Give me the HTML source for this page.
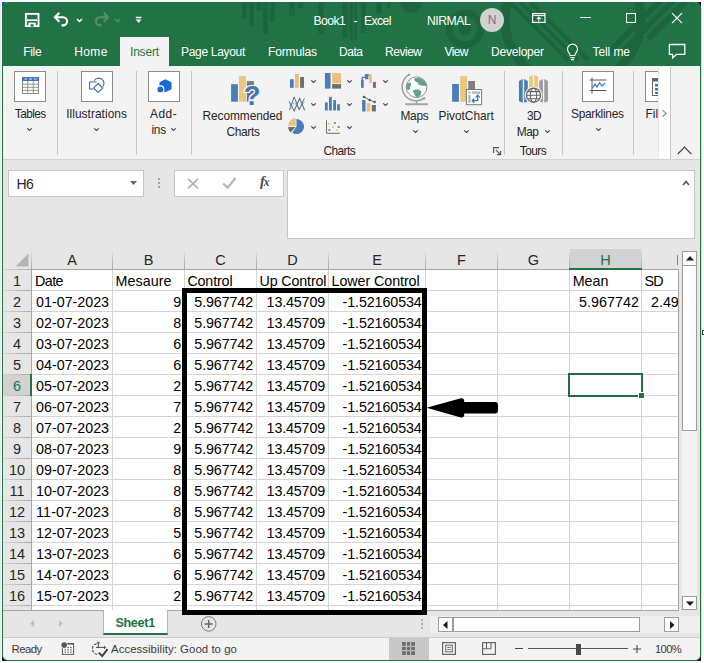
<!DOCTYPE html>
<html><head><meta charset="utf-8"><title>Book1 - Excel</title>
<style>
*{box-sizing:border-box;margin:0;padding:0}
html,body{width:704px;height:663px;overflow:hidden;background:#fff}
body{font-family:"Liberation Sans",sans-serif;position:relative;color:#262626}
div,span,svg{position:absolute}
#win{left:2px;top:2px;width:699px;height:659px;background:#e6e6e6;border-left:1px solid #217346;border-right:1px solid #217346;border-bottom:1px solid #217346;border-radius:6px 6px 6px 6px}
#shadow{left:701px;top:8px;width:1px;height:648px;background:#dedede}
.cor{width:6px;height:6px;background:#0a1030}
#title{left:2px;top:2px;width:699px;height:64px;background:#217346;border-radius:7px 7px 0 0;overflow:hidden}
.tt{color:#fff;font-size:12.6px;white-space:nowrap;line-height:16px}
#ribbon{left:3px;top:66px;width:697px;height:93px;background:#f3f3f3}
#ribline{left:3px;top:159px;width:697px;height:1px;background:#d2d2d2}
.rl{font-size:12.4px;color:#262626;white-space:nowrap;line-height:15px}
.sep{width:1px;background:#c6c6c6;top:71px;height:84px}
.ibox{width:32px;height:31px;border:1px solid #8c8c8c;background:#fff;top:71px}
.chev{width:7px;height:4px}
#grid{left:3px;top:249px;width:675px;height:361px;background:#fff;overflow:hidden}
.ch{top:0;height:20px;background:#e6e6e6;font-size:14.5px;text-align:center;line-height:23px;color:#262626}
.rh{left:0;width:28px;height:21px;background:#e6e6e6;font-size:14.5px;text-align:center;line-height:22px;color:#262626}
.c{height:21px;font-size:14.2px;line-height:22px;white-space:nowrap;color:#000}
.vl{width:1px;background:#d4d4d4;top:21px;height:342px}
.hl{height:1px;background:#d4d4d4;left:29px;width:650px}
.st{font-size:11.8px;color:#3b3b3b;white-space:nowrap;line-height:14px}
</style></head><body>
<div style="left:0;top:2px;width:1px;height:659px;background:#ececec"></div><div class="cor" style="left:2px;top:2px;background:#1a3ff0"></div><div class="cor" style="left:695px;top:2px"></div><div class="cor" style="left:695px;top:655px"></div><div class="cor" style="left:2px;top:655px;background:#0a1030"></div><div id="shadow"></div><div id="win"></div>
<div id="title">
<svg style="left:0;top:0" width="700" height="64" viewBox="2 2 700 64"><g fill="#1c653d"><rect x="242" y="2" width="5" height="17"/><rect x="249" y="2" width="5" height="24"/><rect x="256.500" y="2" width="5" height="9"/><rect x="263" y="2" width="5" height="32"/><rect x="270" y="2" width="4.500" height="20"/><rect x="289.500" y="2" width="5" height="14"/><rect x="298" y="2" width="5" height="6"/><rect x="318.500" y="2" width="5" height="32"/><rect x="342.500" y="2" width="5" height="36"/><rect x="349.500" y="2" width="3.500" height="38"/><rect x="354.500" y="2" width="2.500" height="38"/><rect x="361" y="2" width="5" height="31"/><rect x="376.500" y="2" width="5" height="12"/><rect x="387" y="2" width="3.500" height="6"/><circle cx="411" cy="2" r="11"/></g><g fill="none" stroke="#1c653d"><circle cx="465" cy="29" r="3.200" stroke-width="6.500"/><circle cx="465" cy="29" r="15.700" stroke-width="7"/><circle cx="573" cy="18" r="68" stroke-width="9"/><path d="M510 2 L568 60 M520 2 L578 60 M530 2 L588 60" stroke-width="4"/><path d="M661 0 L610 51 M674 0 L620 54 M687 0 L648 39" stroke-width="6"/></g></svg>
</div>
<div style="left:120px;top:37px;width:49px;height:29px;background:#f3f3f3"></div>
<svg style="left:24px;top:12px" width="16" height="16" viewBox="0 0 16 16"><rect x="1.9" y="1.9" width="12.6" height="12.2" fill="none" stroke="#fff" stroke-width="1.9"/><path d="M3 8.2h10" stroke="#fff" stroke-width="1.7"/><rect x="4.4" y="10.6" width="7.4" height="4" fill="#fff"/><rect x="6.600" y="12.2" width="3" height="2.400" fill="#217346"/></svg>
<svg style="left:53px;top:11px" width="18" height="16" viewBox="0 0 18 16"><path d="M6.3 1.700 L1.900 6.200 L6.300 10.700 M2.200 6.200 H10 A4.100 4.100 0 0 1 10 14.400 H8.500" fill="none" stroke="#fff" stroke-width="2.1"/></svg>
<svg style="left:75.500px;top:17.500px" width="7" height="5" viewBox="0 0 7 5"><path d="M1 1 L3.500 3.600 L6 1" fill="none" stroke="#fff" stroke-width="1.400"/></svg>
<svg style="left:92px;top:11px" width="18" height="16" viewBox="0 0 18 16"><path d="M11.700 1.700 L16.100 6.200 L11.700 10.700 M15.800 6.200 H8 A4.100 4.100 0 0 0 8 14.400 H9.500" fill="none" stroke="#4e9169" stroke-width="2.1"/></svg>
<svg style="left:114px;top:17.500px" width="7" height="5" viewBox="0 0 7 5"><path d="M1 1 L3.500 3.600 L6 1" fill="none" stroke="#4e9169" stroke-width="1.400"/></svg>
<svg style="left:135px;top:16px" width="7" height="8" viewBox="0 0 7 8"><path d="M0.800 1.500h5.600" stroke="#fff" stroke-width="1.500"/><path d="M0.800 3.600h5.600l-2.800 3.400z" fill="#fff"/></svg>
<span style="left:313.50px;top:14.00px;font-size:12.2px;line-height:14px;color:#fff;white-space:pre;letter-spacing:-0.60px">Book1</span><span style="left:353.50px;top:14.00px;font-size:12.2px;line-height:14px;color:#fff;white-space:pre">-</span><span style="left:364.00px;top:14.00px;font-size:12.2px;line-height:14px;color:#fff;white-space:pre;letter-spacing:-0.60px">Excel</span>
<span style="left:427.00px;top:14.00px;font-size:12.2px;line-height:14px;color:#fff;white-space:pre;letter-spacing:-0.46px">NIRMAL</span>
<div style="left:480px;top:8px;width:24px;height:24px;border-radius:12px;background:#d3d0d0;color:#7a7286;font-size:12px;line-height:24px;text-align:center">N</div>
<svg style="left:531px;top:12px" width="16" height="13" viewBox="0 0 16 13"><rect x="1.600" y="1.600" width="12.400" height="8.800" fill="none" stroke="#fff" stroke-width="1.200"/><path d="M1.600 3.600h12.400" stroke="#fff" stroke-width="1"/><path d="M7.800 9.500V5.500M5.800 7.200L7.800 5.200l2 2" fill="none" stroke="#fff" stroke-width="1.100"/></svg>
<div style="left:580px;top:17px;width:11px;height:1px;background:#fff"></div>
<div style="left:626px;top:13px;width:10px;height:10px;border:1.2px solid #fff"></div>
<svg style="left:671px;top:12px" width="12" height="12" viewBox="0 0 12 12"><path d="M1 1.200L11 11.200M11 1.200L1 11.200" stroke="#fff" stroke-width="1.200"/></svg>
<span style="left:23.20px;top:45.00px;font-size:12px;line-height:14px;color:#fff;white-space:pre;letter-spacing:-0.31px">File</span>
<span style="left:74.30px;top:45.00px;font-size:12px;line-height:14px;color:#fff;white-space:pre;letter-spacing:0.35px">Home</span>
<span style="left:130.00px;top:45.00px;font-size:12px;line-height:14px;color:#217346;white-space:pre;letter-spacing:-0.20px">Insert</span>
<span style="left:181.00px;top:45.00px;font-size:12px;line-height:14px;color:#fff;white-space:pre;letter-spacing:-0.31px">Page Layout</span>
<span style="left:268.00px;top:45.00px;font-size:12px;line-height:14px;color:#fff;white-space:pre;letter-spacing:-0.15px">Formulas</span>
<span style="left:339.00px;top:45.00px;font-size:12px;line-height:14px;color:#fff;white-space:pre;letter-spacing:-0.46px">Data</span>
<span style="left:385.00px;top:45.00px;font-size:12px;line-height:14px;color:#fff;white-space:pre;letter-spacing:-0.47px">Review</span>
<span style="left:444.50px;top:45.00px;font-size:12px;line-height:14px;color:#fff;white-space:pre;letter-spacing:-0.60px">View</span>
<span style="left:491.00px;top:45.00px;font-size:12px;line-height:14px;color:#fff;white-space:pre;letter-spacing:-0.21px">Developer</span>
<span style="left:592.50px;top:45.00px;font-size:12px;line-height:14px;color:#fff;white-space:pre;letter-spacing:-0.09px">Tell me</span>
<svg style="left:566px;top:43px" width="13" height="18" viewBox="0 0 13 18"><path d="M4.2 12.5 C4.2 10.5 1.5 9.2 1.5 6.2 A5 5 0 0 1 11.5 6.2 C11.5 9.2 8.8 10.5 8.8 12.5 Z M4.3 14.6h4.4 M5 16.6h3" fill="none" stroke="#fff" stroke-width="1.2"/></svg>
<svg style="left:668px;top:43px" width="19" height="16" viewBox="0 0 19 16"><path d="M1.400 1.500h15.400v9.800H8.600L4.600 15v-3.700H1.400z" fill="none" stroke="#fff" stroke-width="1.300"/></svg>
<div id="ribbon"></div><div id="ribline"></div>
<div class="sep" style="left:57px"></div>
<div class="sep" style="left:136px"></div>
<div class="sep" style="left:191px"></div>
<div class="sep" style="left:504px"></div>
<div class="sep" style="left:562px"></div>
<div class="sep" style="left:633px"></div>
<div class="ibox" style="left:14px"></div>
<svg style="left:22px;top:77px" width="17" height="17" viewBox="0 0 17 17"><rect x="0.500" y="0.500" width="16" height="16" fill="#fff" stroke="#8a8a8a"/><rect x="0" y="0" width="17" height="4" fill="#4472c4"/><path d="M2.500 2h2.500M7 2h3M12 2h2.500" stroke="#dfe8f6" stroke-width="1"/><path d="M0.500 7.200h16M0.500 10.300h16M0.500 13.400h16M5.700 4v12.500M11.300 4v12.500" stroke="#8a8a8a" stroke-width="0.900"/></svg>
<span style="left:14.80px;top:107.00px;font-size:11.9px;line-height:14px;color:#262626;white-space:pre;letter-spacing:-0.60px">Tables</span><svg style="left:26.3px;top:126.5px" width="7" height="5" viewBox="0 0 7 5"><path d="M1.250 1.300L3.500 3.500L5.750 1.300" fill="none" stroke="#444" stroke-width="1.100"/></svg>
<div class="ibox" style="left:81px"></div>
<svg style="left:88px;top:76px" width="20" height="20" viewBox="0 0 20 20"><path d="M8.500 6H1.600V13H5.500" fill="none" stroke="#3b6fb6" stroke-width="1.100"/><path d="M6.200 4.800A5.200 5.200 0 1 1 14.700 10.700" fill="none" stroke="#3b6fb6" stroke-width="1.100"/><path d="M10.200 7.500L14.700 12L10.200 16.500L5.700 12Z" fill="#fff" stroke="#3b6fb6" stroke-width="1.100"/></svg>
<span style="left:66.20px;top:107.00px;font-size:11.9px;line-height:14px;color:#262626;white-space:pre;letter-spacing:0.05px">Illustrations</span><svg style="left:93.4px;top:126.5px" width="7" height="5" viewBox="0 0 7 5"><path d="M1.250 1.300L3.500 3.500L5.750 1.300" fill="none" stroke="#444" stroke-width="1.100"/></svg>
<div class="ibox" style="left:148px"></div>
<svg style="left:155px;top:78px" width="18" height="18" viewBox="0 0 18 18"><path d="M10.300 1.200l6.200 3v7l-6.200 3-5.800-2.800V4.200z" fill="#1b6ad2"/><circle cx="5.400" cy="11.400" r="3.500" fill="#1b6ad2" stroke="#fff" stroke-width="1.100"/></svg>
<span style="left:150.00px;top:107.00px;font-size:11.9px;line-height:14px;color:#262626;white-space:pre;letter-spacing:0.53px">Add-</span><span style="left:151.40px;top:123.00px;font-size:11.9px;line-height:14px;color:#262626;white-space:pre;letter-spacing:-0.22px">ins</span><svg style="left:169.8px;top:126.5px" width="7" height="5" viewBox="0 0 7 5"><path d="M1.250 1.300L3.500 3.500L5.750 1.300" fill="none" stroke="#444" stroke-width="1.100"/></svg>
<svg style="left:224px;top:70px" width="40" height="40" viewBox="224 70 40 40"><rect x="231.100" y="84.200" width="6.800" height="17.500" fill="#4a7ebb"/><rect x="239.100" y="76" width="6.900" height="25.700" fill="#ecc67e"/><rect x="246.900" y="81.200" width="7" height="20.500" fill="#6e6e6e"/><path d="M247 82.600h7M247 84.100h7" stroke="#9a9a9a" stroke-width="0.500"/><text x="243.700" y="105" font-family="Liberation Sans,sans-serif" font-weight="bold" font-size="27.500" fill="#4179b7" stroke="#f3f3f3" stroke-width="2.600" paint-order="stroke" stroke-linejoin="round">?</text></svg>
<span style="left:202.50px;top:109.00px;font-size:11.9px;line-height:14px;color:#262626;white-space:pre;letter-spacing:-0.07px">Recommended</span><span style="left:226.40px;top:125.00px;font-size:11.9px;line-height:14px;color:#262626;white-space:pre;letter-spacing:-0.29px">Charts</span>
<svg style="left:284px;top:68px" width="110" height="70" viewBox="284 68 110 70"><rect x="289.94" y="79.25" width="3.75" height="8.59" fill="#4a7ebb"/><rect x="294.94" y="73.94" width="3.91" height="13.91" fill="#eebf7a"/><rect x="300.09" y="77.06" width="3.91" height="10.78" fill="#6e6e6e"/><rect x="324.94" y="73.0" width="5.62" height="15.62" fill="#4a7ebb"/><rect x="332.12" y="73.0" width="8.91" height="10.16" fill="#eebf7a"/><rect x="332.12" y="84.09" width="8.91" height="4.53" fill="#6e6e6e"/><rect x="361.03" y="79.72" width="2.66" height="8.12" fill="#4a7ebb"/><path d="M362.28 80.19V77.38H365.56V74.88H369.16" fill="none" stroke="#4a7ebb" stroke-width="1.300"/><rect x="364.94" y="74.25" width="3.44" height="5.0" fill="#4a7ebb"/><rect x="369.16" y="74.25" width="2.66" height="8.59" fill="#eebf7a"/><rect x="373.06" y="82.06" width="2.81" height="5.78" fill="#6e6e6e"/><path d="M289.47 110.19L294.16 96.91L299.16 109.88L304.31 98.47" fill="none" stroke="#6e6e6e" stroke-width="1"/><path d="M289.16 101.59L294.16 110.97L299.62 98.47L304.62 110.19" fill="none" stroke="#4a7ebb" stroke-width="1.100"/><path d="M289.47 105.5L294.62 102.69L299.31 108.94L304.31 101.59" fill="none" stroke="#6e6e6e" stroke-width="0.700" opacity="0.700"/><rect x="324.94" y="102.38" width="2.81" height="8.12" fill="#4a7ebb"/><rect x="329.0" y="96.91" width="2.81" height="13.59" fill="#4a7ebb"/><rect x="333.22" y="100.03" width="2.81" height="10.47" fill="#4a7ebb"/><rect x="337.12" y="104.25" width="2.81" height="6.25" fill="#4a7ebb"/><rect x="362.12" y="100.03" width="3.44" height="11.41" fill="#4a7ebb"/><rect x="366.81" y="103.16" width="3.59" height="8.28" fill="#eebf7a"/><rect x="371.81" y="105.03" width="4.06" height="6.41" fill="#6e6e6e"/><path d="M364.0 96.91L369.62 100.03L374.62 102.06" fill="none" stroke="#555" stroke-width="0.900"/><circle cx="364.0" cy="96.91" r="1.250" fill="#555"/><circle cx="369.62" cy="100.03" r="1.250" fill="#555"/><circle cx="374.62" cy="102.06" r="1.250" fill="#555"/><path d="M296.5 126.59L296.50 119.09A7.5 7.5 0 1 1 292.20 132.73Z" fill="#4a7ebb"/><path d="M295.7 125.79L288.20 125.79A7.5 7.5 0 0 1 295.70 118.29Z" fill="#eebf7a"/><path d="M295.6 126.89L290.58 132.46A7.5 7.5 0 0 1 288.10 126.89Z" fill="#6e6e6e"/><path d="M326.5 120.34V133.31H339.94" fill="none" stroke="#6e6e6e" stroke-width="1"/><rect x="327.94" y="122.88" width="1.800" height="1.800" fill="#eebf7a"/><rect x="333.88" y="122.10" width="1.800" height="1.800" fill="#4a7ebb"/><rect x="332.01" y="126.16" width="1.800" height="1.800" fill="#eebf7a"/><rect x="337.79" y="126.16" width="1.800" height="1.800" fill="#4a7ebb"/><rect x="328.41" y="129.13" width="1.800" height="1.800" fill="#4a7ebb"/><rect x="335.91" y="129.13" width="1.800" height="1.800" fill="#eebf7a"/></svg>
<svg style="left:309.7px;top:78.8px" width="7" height="5" viewBox="0 0 7 5"><path d="M1.250 1.300L3.500 3.500L5.750 1.300" fill="none" stroke="#444" stroke-width="1.100"/></svg><svg style="left:309.7px;top:101.5px" width="7" height="5" viewBox="0 0 7 5"><path d="M1.250 1.300L3.500 3.500L5.750 1.300" fill="none" stroke="#444" stroke-width="1.100"/></svg><svg style="left:309.7px;top:124.5px" width="7" height="5" viewBox="0 0 7 5"><path d="M1.250 1.300L3.500 3.500L5.750 1.300" fill="none" stroke="#444" stroke-width="1.100"/></svg><svg style="left:345.5px;top:78.8px" width="7" height="5" viewBox="0 0 7 5"><path d="M1.250 1.300L3.500 3.500L5.750 1.300" fill="none" stroke="#444" stroke-width="1.100"/></svg><svg style="left:345.5px;top:101.5px" width="7" height="5" viewBox="0 0 7 5"><path d="M1.250 1.300L3.500 3.500L5.750 1.300" fill="none" stroke="#444" stroke-width="1.100"/></svg><svg style="left:345.5px;top:124.5px" width="7" height="5" viewBox="0 0 7 5"><path d="M1.250 1.300L3.500 3.500L5.750 1.300" fill="none" stroke="#444" stroke-width="1.100"/></svg><svg style="left:381.9px;top:78.8px" width="7" height="5" viewBox="0 0 7 5"><path d="M1.250 1.300L3.500 3.500L5.750 1.300" fill="none" stroke="#444" stroke-width="1.100"/></svg><svg style="left:381.9px;top:101.5px" width="7" height="5" viewBox="0 0 7 5"><path d="M1.250 1.300L3.500 3.500L5.750 1.300" fill="none" stroke="#444" stroke-width="1.100"/></svg>
<span style="left:323.60px;top:144.00px;font-size:11.9px;line-height:14px;color:#262626;white-space:pre;letter-spacing:-0.60px">Charts</span>
<svg style="left:396px;top:68px" width="50" height="42" viewBox="396 68 50 42"><path d="M409.07 74.68A14 14 0 1 0 424.12 98.26" fill="none" stroke="#a3a3a3" stroke-width="1.600"/><circle cx="409.07" cy="74.68" r="1.300" fill="#a3a3a3"/><circle cx="424.12" cy="98.26" r="1.300" fill="#a3a3a3"/><circle cx="416.600" cy="87.200" r="10.300" fill="#fff" stroke="#8e8e8e" stroke-width="1"/><path d="M413.76 79.08C417.31 76.81 422.99 78.23 425.55 82.2C426.54 84.76 426.11 86.47 425.12 86.18C423.7 85.05 422.28 86.18 420.15 85.33C418.02 84.76 418.73 82.2 416.6 81.92C415.18 81.49 414.47 80.5 413.76 79.08Z" fill="#5fa487"/><path d="M406.65 84.34C408.07 82.2 410.91 82.2 411.34 83.91C410.91 85.76 409.49 86.47 410.2 88.6C409.49 90.73 407.65 90.44 406.8 87.89Z" fill="#5fa487"/><path d="M412.76 90.44C415.18 89.02 419.44 89.31 421.28 91.44C421.57 94.28 419.44 97.12 417.31 97.4C415.18 96.41 413.76 93.57 412.76 90.44Z" fill="#5fa487"/><path d="M416.6 100.39V103.8" stroke="#a3a3a3" stroke-width="1.600"/><path d="M405.23 104.22H427.96" stroke="#a3a3a3" stroke-width="2"/></svg>
<span style="left:400.40px;top:109.00px;font-size:11.9px;line-height:14px;color:#262626;white-space:pre;letter-spacing:-0.23px">Maps</span><svg style="left:411.9px;top:128.5px" width="7" height="5" viewBox="0 0 7 5"><path d="M1.250 1.300L3.500 3.500L5.750 1.300" fill="none" stroke="#444" stroke-width="1.100"/></svg>
<svg style="left:446px;top:68px" width="50" height="42" viewBox="446 68 50 42"><rect x="452.100" y="84" width="6.800" height="17.800" fill="#4a7ebb"/><rect x="460.200" y="76.100" width="6.800" height="25.700" fill="#ecc67e"/><rect x="468.200" y="81" width="6.800" height="10" fill="#808080"/><rect x="466.400" y="89.500" width="15.200" height="15.200" fill="#fff" stroke="#7a7a7a" stroke-width="1"/><rect x="468.400" y="91.500" width="2.200" height="2.200" fill="#b0b0b0"/><rect x="472" y="91.500" width="8" height="2.200" fill="#b0b0b0"/><rect x="468.400" y="95" width="2.200" height="8" fill="#b0b0b0"/><path d="M472.500 100.700H477.700V95.500" fill="none" stroke="#2f6fbd" stroke-width="1.200"/><path d="M474.300 98.600L472.200 100.700L474.300 102.800M475.600 97.300L477.700 95.200L479.800 97.300" fill="none" stroke="#2f6fbd" stroke-width="1.200"/></svg>
<span style="left:438.60px;top:109.00px;font-size:11.9px;line-height:14px;color:#262626;white-space:pre;letter-spacing:-0.04px">PivotChart</span><svg style="left:462.5px;top:128.5px" width="7" height="5" viewBox="0 0 7 5"><path d="M1.250 1.300L3.500 3.500L5.750 1.300" fill="none" stroke="#444" stroke-width="1.100"/></svg>
<svg style="left:493px;top:147px" width="9" height="9" viewBox="0 0 9 9"><path d="M0.600 6V0.600H6" fill="none" stroke="#555" stroke-width="1.100"/><path d="M2.800 2.800L7.500 7.500M7.600 4V7.600H4" fill="none" stroke="#555" stroke-width="1.100"/></svg>
<svg style="left:512px;top:68px" width="44" height="42" viewBox="512 68 44 42"><path d="M518.96 80.97L522.76 79.08V102.81L518.96 101.23Z" fill="#4a7ebb"/><path d="M524.15 79.08L527.82 80.97V101.23L524.15 102.81Z" fill="#4a7ebb"/><path d="M529.09 76.86L532.89 74.96V102.81L529.09 101.23Z" fill="#ecc67e"/><path d="M534.15 74.96L537.95 76.86V101.23L534.15 102.81Z" fill="#ecc67e"/><path d="M539.22 80.97L542.89 79.08V102.81L539.22 101.23Z" fill="#9c9c9c"/><path d="M544.28 79.08L547.95 80.97V101.23L544.28 102.81Z" fill="#9c9c9c"/><circle cx="533.500" cy="95.200" r="7.400" fill="#fff" stroke="#f3f3f3" stroke-width="2.600"/><circle cx="533.500" cy="95.200" r="7" fill="#fff" stroke="#666" stroke-width="1.300"/><ellipse cx="533.500" cy="95.200" rx="3.200" ry="7" fill="none" stroke="#666" stroke-width="1.100"/><path d="M526.500 95.200h14M527.500 91.600h12M527.500 98.800h12" stroke="#666" stroke-width="1.100"/></svg>
<span style="left:527.00px;top:109.00px;font-size:11.9px;line-height:14px;color:#262626;white-space:pre;letter-spacing:-0.60px">3D</span><span style="left:516.80px;top:125.00px;font-size:11.9px;line-height:14px;color:#262626;white-space:pre;letter-spacing:-0.47px">Map</span><svg style="left:543.7px;top:128.5px" width="7" height="5" viewBox="0 0 7 5"><path d="M1.250 1.300L3.500 3.500L5.750 1.300" fill="none" stroke="#444" stroke-width="1.100"/></svg>
<span style="left:519.80px;top:144.00px;font-size:11.9px;line-height:14px;color:#262626;white-space:pre;letter-spacing:-0.57px">Tours</span>
<div class="ibox" style="left:582px"></div>
<svg style="left:589px;top:77px" width="20" height="18" viewBox="0 0 20 18"><path d="M3 0.5v16 M0.5 3h17 M0.5 13.5h17" stroke="#555" stroke-width="1" fill="none"/><path d="M3.5 11l2.5-4 2 3 2.500-4.500 2.500 3.500 3-3" fill="none" stroke="#3b78c4" stroke-width="1.2"/></svg>
<span style="left:571.00px;top:107.00px;font-size:11.9px;line-height:14px;color:#262626;white-space:pre;letter-spacing:-0.29px">Sparklines</span><svg style="left:594.5px;top:126.5px" width="7" height="5" viewBox="0 0 7 5"><path d="M1.250 1.300L3.500 3.500L5.750 1.300" fill="none" stroke="#444" stroke-width="1.100"/></svg>
<div class="ibox" style="left:645px;width:20px"></div>
<svg style="left:652px;top:78px" width="8" height="18" viewBox="0 0 8 18"><rect x="0.5" y="0.500" width="12" height="17" fill="#fff" stroke="#666"/><rect x="0.5" y="0.5" width="12" height="3" fill="#666"/><rect x="3" y="6" width="6" height="2.500" fill="#3b78c4"/><rect x="3" y="10" width="6" height="2.500" fill="#3b78c4"/><rect x="3" y="14" width="6" height="2" fill="#3b78c4"/></svg>
<div style="left:640px;top:100px;width:18.400px;height:30px;overflow:hidden"><span style="left:5.60px;top:7.00px;font-size:11.9px;line-height:14px;color:#262626;white-space:pre">Filters</span></div>
<div style="left:658px;top:67px;width:13px;height:92px;background:#fff;border-right:1px solid #c6c6c6;border-left:1px solid #e6e6e6"></div>
<svg style="left:661px;top:109px" width="7" height="9" viewBox="0 0 7 9"><path d="M1.600 1.200l3.400 3.200-3.400 3.200" fill="none" stroke="#858585" stroke-width="1.100"/></svg>
<svg style="left:677px;top:146px" width="15" height="9" viewBox="0 0 15 9"><path d="M0.800 8L7.500 1.200 14.200 8" fill="none" stroke="#444" stroke-width="1.2"/></svg>
<div style="left:8px;top:170px;width:136px;height:27px;background:#fff;border:1px solid #c6c6c6"></div>
<span style="left:16.50px;top:176.00px;font-size:14px;line-height:16px;color:#262626;white-space:pre;letter-spacing:-0.60px">H6</span>
<svg style="left:130px;top:181px" width="7" height="4" viewBox="0 0 7 4"><path d="M0 0h7L3.500 4z" fill="#666"/></svg>
<div style="left:158px;top:178px;width:2px;height:2px;background:#a0a0a0"></div><div style="left:158px;top:182px;width:2px;height:2px;background:#a0a0a0"></div><div style="left:158px;top:186px;width:2px;height:2px;background:#a0a0a0"></div>
<div style="left:174px;top:170px;width:110px;height:27px;background:#fff;border:1px solid #c6c6c6"></div>
<svg style="left:187px;top:178px" width="12" height="11" viewBox="0 0 12 11"><path d="M1 0.800l10 9.600M11 0.800l-10 9.600" stroke="#b2b2b2" stroke-width="1.700"/></svg>
<svg style="left:221px;top:177px" width="16" height="12" viewBox="0 0 16 12"><path d="M2.200 6.500l4.400 4.200 8-9.600" fill="none" stroke="#b8b8b8" stroke-width="2.300"/></svg>
<span style="left:260px;top:173px;font-family:'Liberation Serif',serif;font-style:italic;font-weight:bold;font-size:14.500px;line-height:17px;color:#4a4a4a;letter-spacing:-1px">f<span style="position:static;font-size:11.500px;letter-spacing:0">x</span></span>
<div style="left:287px;top:170px;width:408px;height:69px;background:#fff;border:1px solid #c6c6c6"></div>
<svg style="left:682px;top:180px" width="8" height="6" viewBox="0 0 8 6"><path d="M1 5l3-3.500 3 3.500" fill="none" stroke="#555" stroke-width="1.6"/></svg>
<div id="grid">
<div class="ch" style="left:0;width:29px"></div>
<svg style="left:12px;top:4px" width="14" height="14" viewBox="0 0 14 14"><path d="M13.500 0.500V13.500H0.500z" fill="#b4b4b4"/></svg>
<div class="ch" style="left:29px;width:80px">A</div>
<div style="left:109px;top:0;width:1px;height:20px;background:linear-gradient(#e6e6e6,#a8a8a8)"></div>
<div class="ch" style="left:110px;width:71px">B</div>
<div style="left:181px;top:0;width:1px;height:20px;background:linear-gradient(#e6e6e6,#a8a8a8)"></div>
<div class="ch" style="left:182px;width:71px">C</div>
<div style="left:253px;top:0;width:1px;height:20px;background:linear-gradient(#e6e6e6,#a8a8a8)"></div>
<div class="ch" style="left:254px;width:71px">D</div>
<div style="left:325px;top:0;width:1px;height:20px;background:linear-gradient(#e6e6e6,#a8a8a8)"></div>
<div class="ch" style="left:326px;width:96px">E</div>
<div style="left:422px;top:0;width:1px;height:20px;background:linear-gradient(#e6e6e6,#a8a8a8)"></div>
<div class="ch" style="left:423px;width:71px">F</div>
<div style="left:494px;top:0;width:1px;height:20px;background:linear-gradient(#e6e6e6,#a8a8a8)"></div>
<div class="ch" style="left:495px;width:71px">G</div>
<div style="left:566px;top:0;width:1px;height:20px;background:linear-gradient(#e6e6e6,#a8a8a8)"></div>
<div class="ch" style="left:567px;width:71px;background:#d2d2d2;color:#217346">H</div>
<div style="left:638px;top:0;width:1px;height:20px;background:linear-gradient(#e6e6e6,#a8a8a8)"></div>
<div class="ch" style="left:639px;width:38px"></div>
<div style="left:677px;top:0;width:1px;height:20px;background:linear-gradient(#e6e6e6,#a8a8a8)"></div>
<div style="left:28px;top:0;width:1px;height:20px;background:linear-gradient(#e6e6e6,#a8a8a8)"></div>
<div style="left:674px;top:6px;width:1px;height:10px;background:#b87a2a"></div>
<div class="rh" style="top:21px">1</div>
<div style="left:0;top:41px;width:28px;height:1px;background:linear-gradient(90deg,#d6d6d6,#a8a8a8)"></div>
<div class="rh" style="top:42px">2</div>
<div style="left:0;top:62px;width:28px;height:1px;background:linear-gradient(90deg,#d6d6d6,#a8a8a8)"></div>
<div class="rh" style="top:63px">3</div>
<div style="left:0;top:83px;width:28px;height:1px;background:linear-gradient(90deg,#d6d6d6,#a8a8a8)"></div>
<div class="rh" style="top:84px">4</div>
<div style="left:0;top:104px;width:28px;height:1px;background:linear-gradient(90deg,#d6d6d6,#a8a8a8)"></div>
<div class="rh" style="top:105px">5</div>
<div style="left:0;top:125px;width:28px;height:1px;background:linear-gradient(90deg,#d6d6d6,#a8a8a8)"></div>
<div class="rh" style="top:126px;background:#d2d2d2;color:#217346">6</div>
<div style="left:0;top:146px;width:28px;height:1px;background:linear-gradient(90deg,#d6d6d6,#a8a8a8)"></div>
<div class="rh" style="top:147px">7</div>
<div style="left:0;top:167px;width:28px;height:1px;background:linear-gradient(90deg,#d6d6d6,#a8a8a8)"></div>
<div class="rh" style="top:168px">8</div>
<div style="left:0;top:188px;width:28px;height:1px;background:linear-gradient(90deg,#d6d6d6,#a8a8a8)"></div>
<div class="rh" style="top:189px">9</div>
<div style="left:0;top:209px;width:28px;height:1px;background:linear-gradient(90deg,#d6d6d6,#a8a8a8)"></div>
<div class="rh" style="top:210px">10</div>
<div style="left:0;top:230px;width:28px;height:1px;background:linear-gradient(90deg,#d6d6d6,#a8a8a8)"></div>
<div class="rh" style="top:231px">11</div>
<div style="left:0;top:251px;width:28px;height:1px;background:linear-gradient(90deg,#d6d6d6,#a8a8a8)"></div>
<div class="rh" style="top:252px">12</div>
<div style="left:0;top:272px;width:28px;height:1px;background:linear-gradient(90deg,#d6d6d6,#a8a8a8)"></div>
<div class="rh" style="top:273px">13</div>
<div style="left:0;top:293px;width:28px;height:1px;background:linear-gradient(90deg,#d6d6d6,#a8a8a8)"></div>
<div class="rh" style="top:294px">14</div>
<div style="left:0;top:314px;width:28px;height:1px;background:linear-gradient(90deg,#d6d6d6,#a8a8a8)"></div>
<div class="rh" style="top:315px">15</div>
<div style="left:0;top:335px;width:28px;height:1px;background:linear-gradient(90deg,#d6d6d6,#a8a8a8)"></div>
<div class="rh" style="top:336px">16</div>
<div style="left:0;top:356px;width:28px;height:1px;background:linear-gradient(90deg,#d6d6d6,#a8a8a8)"></div>
<div class="rh" style="top:357px"></div>
<div style="left:0;top:377px;width:28px;height:1px;background:linear-gradient(90deg,#d6d6d6,#a8a8a8)"></div>
<div style="left:27px;top:125px;width:2px;height:22px;background:#217346;z-index:3"></div>
<div class="vl" style="left:109px"></div>
<div class="vl" style="left:181px"></div>
<div class="vl" style="left:253px"></div>
<div class="vl" style="left:325px"></div>
<div class="vl" style="left:422px"></div>
<div class="vl" style="left:494px"></div>
<div class="vl" style="left:566px"></div>
<div class="vl" style="left:638px"></div>
<div class="vl" style="left:677px"></div>
<div class="vl" style="left:28px;background:#a6a6a6"></div>
<div class="hl" style="top:41px"></div>
<div class="hl" style="top:62px"></div>
<div class="hl" style="top:83px"></div>
<div class="hl" style="top:104px"></div>
<div class="hl" style="top:125px"></div>
<div class="hl" style="top:146px"></div>
<div class="hl" style="top:167px"></div>
<div class="hl" style="top:188px"></div>
<div class="hl" style="top:209px"></div>
<div class="hl" style="top:230px"></div>
<div class="hl" style="top:251px"></div>
<div class="hl" style="top:272px"></div>
<div class="hl" style="top:293px"></div>
<div class="hl" style="top:314px"></div>
<div class="hl" style="top:335px"></div>
<div class="hl" style="top:356px"></div>
<div class="hl" style="top:377px"></div>
<div style="left:0;top:20px;width:28px;height:1px;background:linear-gradient(90deg,#d6d6d6,#a8a8a8)"></div><div style="left:28px;top:20px;width:650px;height:1px;background:#a6a6a6"></div>
<div style="left:566px;top:19px;width:73px;height:2px;background:#217346"></div>
<span style="left:32.00px;top:24.00px;font-size:14.3px;line-height:16px;color:#000;white-space:pre;letter-spacing:-0.56px">Date</span><span style="left:112.50px;top:24.00px;font-size:14.3px;line-height:16px;color:#000;white-space:pre;letter-spacing:0.06px">Mesaure</span><span style="left:184.40px;top:24.00px;font-size:14.3px;line-height:16px;color:#000;white-space:pre;letter-spacing:-0.15px">Control</span><span style="left:256.50px;top:24.00px;font-size:14.3px;line-height:16px;color:#000;white-space:pre;letter-spacing:-0.15px">Up Control</span><span style="left:328.50px;top:24.00px;font-size:14.3px;line-height:16px;color:#000;white-space:pre;letter-spacing:-0.07px">Lower Control</span><span style="left:569.70px;top:24.00px;font-size:14.3px;line-height:16px;color:#000;white-space:pre;letter-spacing:0.02px">Mean</span><span style="left:641.40px;top:24.00px;font-size:14.3px;line-height:16px;color:#000;white-space:pre;letter-spacing:-0.60px">SD</span>
<span style="left:33.10px;top:45.00px;font-size:14.3px;line-height:16px;color:#000;white-space:pre;letter-spacing:-0.02px">01-07-2023</span><span style="left:170.26px;top:45.00px;font-size:14.3px;line-height:16px;color:#000;white-space:pre">9</span><span style="left:191.30px;top:45.00px;font-size:14.3px;line-height:16px;color:#000;white-space:pre;letter-spacing:-0.12px">5.967742</span><span style="left:263.60px;top:45.00px;font-size:14.3px;line-height:16px;color:#000;white-space:pre;letter-spacing:-0.15px">13.45709</span><span style="left:339.50px;top:45.00px;font-size:14.3px;line-height:16px;color:#000;white-space:pre;letter-spacing:-0.10px">-1.52160534</span>
<span style="left:33.10px;top:66.00px;font-size:14.3px;line-height:16px;color:#000;white-space:pre;letter-spacing:-0.02px">02-07-2023</span><span style="left:170.26px;top:66.00px;font-size:14.3px;line-height:16px;color:#000;white-space:pre">8</span><span style="left:191.30px;top:66.00px;font-size:14.3px;line-height:16px;color:#000;white-space:pre;letter-spacing:-0.12px">5.967742</span><span style="left:263.60px;top:66.00px;font-size:14.3px;line-height:16px;color:#000;white-space:pre;letter-spacing:-0.15px">13.45709</span><span style="left:339.50px;top:66.00px;font-size:14.3px;line-height:16px;color:#000;white-space:pre;letter-spacing:-0.10px">-1.52160534</span>
<span style="left:33.10px;top:87.00px;font-size:14.3px;line-height:16px;color:#000;white-space:pre;letter-spacing:-0.02px">03-07-2023</span><span style="left:170.26px;top:87.00px;font-size:14.3px;line-height:16px;color:#000;white-space:pre">6</span><span style="left:191.30px;top:87.00px;font-size:14.3px;line-height:16px;color:#000;white-space:pre;letter-spacing:-0.12px">5.967742</span><span style="left:263.60px;top:87.00px;font-size:14.3px;line-height:16px;color:#000;white-space:pre;letter-spacing:-0.15px">13.45709</span><span style="left:339.50px;top:87.00px;font-size:14.3px;line-height:16px;color:#000;white-space:pre;letter-spacing:-0.10px">-1.52160534</span>
<span style="left:33.10px;top:108.00px;font-size:14.3px;line-height:16px;color:#000;white-space:pre;letter-spacing:-0.02px">04-07-2023</span><span style="left:170.26px;top:108.00px;font-size:14.3px;line-height:16px;color:#000;white-space:pre">6</span><span style="left:191.30px;top:108.00px;font-size:14.3px;line-height:16px;color:#000;white-space:pre;letter-spacing:-0.12px">5.967742</span><span style="left:263.60px;top:108.00px;font-size:14.3px;line-height:16px;color:#000;white-space:pre;letter-spacing:-0.15px">13.45709</span><span style="left:339.50px;top:108.00px;font-size:14.3px;line-height:16px;color:#000;white-space:pre;letter-spacing:-0.10px">-1.52160534</span>
<span style="left:33.10px;top:129.00px;font-size:14.3px;line-height:16px;color:#000;white-space:pre;letter-spacing:-0.02px">05-07-2023</span><span style="left:170.26px;top:129.00px;font-size:14.3px;line-height:16px;color:#000;white-space:pre">2</span><span style="left:191.30px;top:129.00px;font-size:14.3px;line-height:16px;color:#000;white-space:pre;letter-spacing:-0.12px">5.967742</span><span style="left:263.60px;top:129.00px;font-size:14.3px;line-height:16px;color:#000;white-space:pre;letter-spacing:-0.15px">13.45709</span><span style="left:339.50px;top:129.00px;font-size:14.3px;line-height:16px;color:#000;white-space:pre;letter-spacing:-0.10px">-1.52160534</span>
<span style="left:33.10px;top:150.00px;font-size:14.3px;line-height:16px;color:#000;white-space:pre;letter-spacing:-0.02px">06-07-2023</span><span style="left:170.26px;top:150.00px;font-size:14.3px;line-height:16px;color:#000;white-space:pre">7</span><span style="left:191.30px;top:150.00px;font-size:14.3px;line-height:16px;color:#000;white-space:pre;letter-spacing:-0.12px">5.967742</span><span style="left:263.60px;top:150.00px;font-size:14.3px;line-height:16px;color:#000;white-space:pre;letter-spacing:-0.15px">13.45709</span><span style="left:339.50px;top:150.00px;font-size:14.3px;line-height:16px;color:#000;white-space:pre;letter-spacing:-0.10px">-1.52160534</span>
<span style="left:33.10px;top:171.00px;font-size:14.3px;line-height:16px;color:#000;white-space:pre;letter-spacing:-0.02px">07-07-2023</span><span style="left:170.26px;top:171.00px;font-size:14.3px;line-height:16px;color:#000;white-space:pre">2</span><span style="left:191.30px;top:171.00px;font-size:14.3px;line-height:16px;color:#000;white-space:pre;letter-spacing:-0.12px">5.967742</span><span style="left:263.60px;top:171.00px;font-size:14.3px;line-height:16px;color:#000;white-space:pre;letter-spacing:-0.15px">13.45709</span><span style="left:339.50px;top:171.00px;font-size:14.3px;line-height:16px;color:#000;white-space:pre;letter-spacing:-0.10px">-1.52160534</span>
<span style="left:33.10px;top:192.00px;font-size:14.3px;line-height:16px;color:#000;white-space:pre;letter-spacing:-0.02px">08-07-2023</span><span style="left:170.26px;top:192.00px;font-size:14.3px;line-height:16px;color:#000;white-space:pre">9</span><span style="left:191.30px;top:192.00px;font-size:14.3px;line-height:16px;color:#000;white-space:pre;letter-spacing:-0.12px">5.967742</span><span style="left:263.60px;top:192.00px;font-size:14.3px;line-height:16px;color:#000;white-space:pre;letter-spacing:-0.15px">13.45709</span><span style="left:339.50px;top:192.00px;font-size:14.3px;line-height:16px;color:#000;white-space:pre;letter-spacing:-0.10px">-1.52160534</span>
<span style="left:33.10px;top:213.00px;font-size:14.3px;line-height:16px;color:#000;white-space:pre;letter-spacing:-0.02px">09-07-2023</span><span style="left:170.26px;top:213.00px;font-size:14.3px;line-height:16px;color:#000;white-space:pre">8</span><span style="left:191.30px;top:213.00px;font-size:14.3px;line-height:16px;color:#000;white-space:pre;letter-spacing:-0.12px">5.967742</span><span style="left:263.60px;top:213.00px;font-size:14.3px;line-height:16px;color:#000;white-space:pre;letter-spacing:-0.15px">13.45709</span><span style="left:339.50px;top:213.00px;font-size:14.3px;line-height:16px;color:#000;white-space:pre;letter-spacing:-0.10px">-1.52160534</span>
<span style="left:33.10px;top:234.00px;font-size:14.3px;line-height:16px;color:#000;white-space:pre;letter-spacing:-0.02px">10-07-2023</span><span style="left:170.26px;top:234.00px;font-size:14.3px;line-height:16px;color:#000;white-space:pre">8</span><span style="left:191.30px;top:234.00px;font-size:14.3px;line-height:16px;color:#000;white-space:pre;letter-spacing:-0.12px">5.967742</span><span style="left:263.60px;top:234.00px;font-size:14.3px;line-height:16px;color:#000;white-space:pre;letter-spacing:-0.15px">13.45709</span><span style="left:339.50px;top:234.00px;font-size:14.3px;line-height:16px;color:#000;white-space:pre;letter-spacing:-0.10px">-1.52160534</span>
<span style="left:33.10px;top:255.00px;font-size:14.3px;line-height:16px;color:#000;white-space:pre;letter-spacing:0.10px">11-07-2023</span><span style="left:170.26px;top:255.00px;font-size:14.3px;line-height:16px;color:#000;white-space:pre">8</span><span style="left:191.30px;top:255.00px;font-size:14.3px;line-height:16px;color:#000;white-space:pre;letter-spacing:-0.12px">5.967742</span><span style="left:263.60px;top:255.00px;font-size:14.3px;line-height:16px;color:#000;white-space:pre;letter-spacing:-0.15px">13.45709</span><span style="left:339.50px;top:255.00px;font-size:14.3px;line-height:16px;color:#000;white-space:pre;letter-spacing:-0.10px">-1.52160534</span>
<span style="left:33.10px;top:276.00px;font-size:14.3px;line-height:16px;color:#000;white-space:pre;letter-spacing:-0.02px">12-07-2023</span><span style="left:170.26px;top:276.00px;font-size:14.3px;line-height:16px;color:#000;white-space:pre">5</span><span style="left:191.30px;top:276.00px;font-size:14.3px;line-height:16px;color:#000;white-space:pre;letter-spacing:-0.12px">5.967742</span><span style="left:263.60px;top:276.00px;font-size:14.3px;line-height:16px;color:#000;white-space:pre;letter-spacing:-0.15px">13.45709</span><span style="left:339.50px;top:276.00px;font-size:14.3px;line-height:16px;color:#000;white-space:pre;letter-spacing:-0.10px">-1.52160534</span>
<span style="left:33.10px;top:297.00px;font-size:14.3px;line-height:16px;color:#000;white-space:pre;letter-spacing:-0.02px">13-07-2023</span><span style="left:170.26px;top:297.00px;font-size:14.3px;line-height:16px;color:#000;white-space:pre">6</span><span style="left:191.30px;top:297.00px;font-size:14.3px;line-height:16px;color:#000;white-space:pre;letter-spacing:-0.12px">5.967742</span><span style="left:263.60px;top:297.00px;font-size:14.3px;line-height:16px;color:#000;white-space:pre;letter-spacing:-0.15px">13.45709</span><span style="left:339.50px;top:297.00px;font-size:14.3px;line-height:16px;color:#000;white-space:pre;letter-spacing:-0.10px">-1.52160534</span>
<span style="left:33.10px;top:318.00px;font-size:14.3px;line-height:16px;color:#000;white-space:pre;letter-spacing:-0.02px">14-07-2023</span><span style="left:170.26px;top:318.00px;font-size:14.3px;line-height:16px;color:#000;white-space:pre">6</span><span style="left:191.30px;top:318.00px;font-size:14.3px;line-height:16px;color:#000;white-space:pre;letter-spacing:-0.12px">5.967742</span><span style="left:263.60px;top:318.00px;font-size:14.3px;line-height:16px;color:#000;white-space:pre;letter-spacing:-0.15px">13.45709</span><span style="left:339.50px;top:318.00px;font-size:14.3px;line-height:16px;color:#000;white-space:pre;letter-spacing:-0.10px">-1.52160534</span>
<span style="left:33.10px;top:339.00px;font-size:14.3px;line-height:16px;color:#000;white-space:pre;letter-spacing:-0.02px">15-07-2023</span><span style="left:170.26px;top:339.00px;font-size:14.3px;line-height:16px;color:#000;white-space:pre">2</span><span style="left:191.30px;top:339.00px;font-size:14.3px;line-height:16px;color:#000;white-space:pre;letter-spacing:-0.12px">5.967742</span><span style="left:263.60px;top:339.00px;font-size:14.3px;line-height:16px;color:#000;white-space:pre;letter-spacing:-0.15px">13.45709</span><span style="left:339.50px;top:339.00px;font-size:14.3px;line-height:16px;color:#000;white-space:pre;letter-spacing:-0.10px">-1.52160534</span>
<span style="left:576.00px;top:45.00px;font-size:14.3px;line-height:16px;color:#000;white-space:pre;letter-spacing:0.05px">5.967742</span><span style="left:648.00px;top:45.00px;font-size:14.3px;line-height:16px;color:#000;white-space:pre">2.49</span>
<div style="left:565px;top:124px;width:75px;height:24px;border:2px solid #1e6e42"></div>
<div style="left:635px;top:143px;width:7px;height:7px;background:#217346;border:1px solid #fff"></div>
<div style="left:179px;top:39px;width:245px;height:400px;border:5px solid #000;border-bottom:none"></div>
<svg style="left:417px;top:141px" width="84" height="36" viewBox="420 390 84 36"><path d="M426.500 407.700L460 398.400Q463.800 397.400 464.200 400.500L464.200 402L495 402Q498 402 498 405L498 410.500Q498 413.500 495 413.500L464.200 413.500L464.200 415.200Q463.800 418.300 460 417.200Z" fill="#000"/></svg>
</div>
<div style="left:679px;top:250px;width:21px;height:362px;background:#e6e6e6"></div>
<div style="left:678px;top:269px;width:1px;height:341px;background:#a6a6a6"></div>
<div style="left:682px;top:266px;width:15px;height:330px;background:#f3f3f3"></div>
<div style="left:682px;top:251px;width:15px;height:15px;background:#fff;border:1px solid #9c9c9c"></div>
<svg style="left:686px;top:256px" width="8" height="5" viewBox="0 0 8 5"><path d="M0 4.500h8L4 0z" fill="#1a1a1a"/></svg>
<div style="left:682px;top:265px;width:15px;height:166px;background:#fff;border:1px solid #9c9c9c"></div>
<div style="left:682px;top:596px;width:15px;height:14px;background:#fff;border:1px solid #9c9c9c"></div>
<svg style="left:686px;top:601px" width="8" height="5" viewBox="0 0 8 5"><path d="M0 0.500h8L4 5z" fill="#1a1a1a"/></svg>
<div style="left:3px;top:610px;width:697px;height:28px;background:#e6e6e6"></div>
<div style="left:3px;top:610px;width:676px;height:1px;background:#a6a6a6"></div>
<div style="left:430px;top:616px;width:270px;height:17px;background:#efefef"></div>
<div style="left:3px;top:637px;width:697px;height:1px;background:#cdcdcd"></div>
<div style="left:103px;top:610px;width:65px;height:25px;background:#fff;border-left:1px solid #b4b4b4;border-right:1px solid #b4b4b4;border-bottom:2px solid #217346"></div>
<span style="left:115.40px;top:616.00px;font-size:12.6px;line-height:14px;color:#217346;white-space:pre;letter-spacing:-0.31px;font-weight:bold">Sheet1</span>
<svg style="left:30px;top:620px" width="4" height="7" viewBox="0 0 4 7"><path d="M4 0v7L0 3.500z" fill="#c0c0c0"/></svg>
<svg style="left:59px;top:620px" width="4" height="7" viewBox="0 0 4 7"><path d="M0 0v7L4 3.500z" fill="#c0c0c0"/></svg>
<svg style="left:200px;top:615px" width="18" height="18" viewBox="0 0 18 18"><circle cx="8.700" cy="8.900" r="7.300" fill="none" stroke="#7a7a7a" stroke-width="1"/><path d="M4.700 8.900h8M8.700 4.900v8" stroke="#666" stroke-width="1.500"/></svg>
<div style="left:421px;top:619px;width:2px;height:2px;background:#b4b4b4"></div><div style="left:421px;top:623px;width:2px;height:2px;background:#b4b4b4"></div><div style="left:421px;top:627px;width:2px;height:2px;background:#b4b4b4"></div>
<div style="left:438px;top:617px;width:15px;height:15px;background:#fff;border:1px solid #9c9c9c"></div>
<svg style="left:443px;top:621px" width="5" height="8" viewBox="0 0 5 8"><path d="M4.500 0v8L0 4z" fill="#1a1a1a"/></svg>
<div style="left:452px;top:617px;width:188px;height:15px;background:#fff;border:1px solid #9c9c9c;border-left-width:2px"></div>
<div style="left:664px;top:617px;width:15px;height:15px;background:#fff;border:1px solid #9c9c9c"></div>
<svg style="left:670px;top:621px" width="5" height="8" viewBox="0 0 5 8"><path d="M0 0v8L4.500 4z" fill="#1a1a1a"/></svg>
<div style="left:182px;top:605px;width:245px;height:10px;border:5px solid #000;border-top:none"></div>
<div style="left:3px;top:638px;width:697px;height:22px;background:#f3f3f3;border-radius:0 0 5px 5px"></div>
<span style="left:11.60px;top:643.00px;font-size:11.4px;line-height:12px;color:#3b3b3b;white-space:pre;letter-spacing:-0.60px">Ready</span>
<svg style="left:58px;top:639px" width="20" height="20" viewBox="58 639 20 20"><rect x="62.400" y="643.600" width="11.200" height="10.800" fill="#fff" stroke="#5a5a5a" stroke-width="1"/><path d="M66 643.800h8" stroke="#5a5a5a" stroke-width="1.600"/><g fill="#666"><rect x="64.500" y="647" width="1.600" height="1.200"/><rect x="67.300" y="647" width="1.600" height="1.200"/><rect x="70.100" y="647" width="1.600" height="1.200"/><rect x="64.500" y="649.300" width="1.600" height="1.200"/><rect x="67.300" y="649.300" width="1.600" height="1.200"/><rect x="70.100" y="649.300" width="1.600" height="1.200"/><rect x="64.500" y="651.600" width="1.600" height="1.200"/><rect x="67.300" y="651.600" width="1.600" height="1.200"/><rect x="70.100" y="651.600" width="1.600" height="1.200"/></g><circle cx="64.200" cy="645.100" r="3.400" fill="#f3f3f3"/><circle cx="64.200" cy="645.100" r="2.800" fill="#555"/></svg>
<svg style="left:89px;top:639px" width="22" height="20" viewBox="89 639 22 20"><path d="M96.500 643.700A5.500 5.500 0 0 0 97.700 654.500" fill="none" stroke="#4a4a4a" stroke-width="1.100" stroke-dasharray="2.600 1.400"/><path d="M98.300 642v6M96 647.400h9.500M96.800 643.600l1.500-1.700 1.500 1.700M104 645.900l1.600 1.500-1.600 1.500" fill="none" stroke="#4a4a4a" stroke-width="1"/><path d="M98.700 652.600l3.500 3.400 5.300-6.800" fill="none" stroke="#3b3b3b" stroke-width="1.900"/></svg>
<span style="left:111.00px;top:643.00px;font-size:11.4px;line-height:12px;color:#3b3b3b;white-space:pre;letter-spacing:0.05px">Accessibility: Good to go</span>
<div style="left:389px;top:638px;width:40px;height:22px;background:#c8c8c8"></div>
<svg style="left:402px;top:642px" width="13" height="13" viewBox="0 0 13 13"><rect x="0" y="0" width="13" height="13" fill="#6e6e6e"/><path d="M4.300 0v13M8.700 0v13M0 4.300h13M0 8.700h13" stroke="#c8c8c8" stroke-width="1"/></svg>
<svg style="left:442px;top:642px" width="14" height="13" viewBox="0 0 14 13"><rect x="0.600" y="0.600" width="12.800" height="11.800" fill="none" stroke="#666" stroke-width="1.200"/><rect x="3.700" y="3.200" width="6.600" height="6.600" fill="none" stroke="#666" stroke-width="1"/><path d="M5.200 5.500h3.600M5.200 7.500h3.600" stroke="#666" stroke-width="0.900"/></svg>
<svg style="left:482px;top:642px" width="14" height="13" viewBox="0 0 14 13"><rect x="0.600" y="0.600" width="12.800" height="11.800" fill="none" stroke="#666" stroke-width="1.200"/><path d="M4.500 0.600v6.200M9 0.600v6.200M0.600 6.800h8.400" stroke="#666" stroke-width="1.100" fill="none"/></svg>
<div style="left:515px;top:647.500px;width:8px;height:1.500px;background:#444"></div>
<div style="left:528px;top:648px;width:100px;height:1px;background:#555"></div>
<div style="left:576px;top:644px;width:5px;height:11px;background:#484848"></div>
<svg style="left:633px;top:645px" width="8" height="8" viewBox="0 0 8 8"><path d="M0 4h8M4 0v8" stroke="#444" stroke-width="1.100"/></svg>
<span style="left:654.90px;top:643.00px;font-size:11.2px;line-height:12px;color:#3b3b3b;white-space:pre;letter-spacing:-0.60px">100%</span>
<div style="left:702px;top:330px;width:2px;height:5px;border:1px solid #3a3a3a;border-right:none;background:#fff"></div>
</body></html>
